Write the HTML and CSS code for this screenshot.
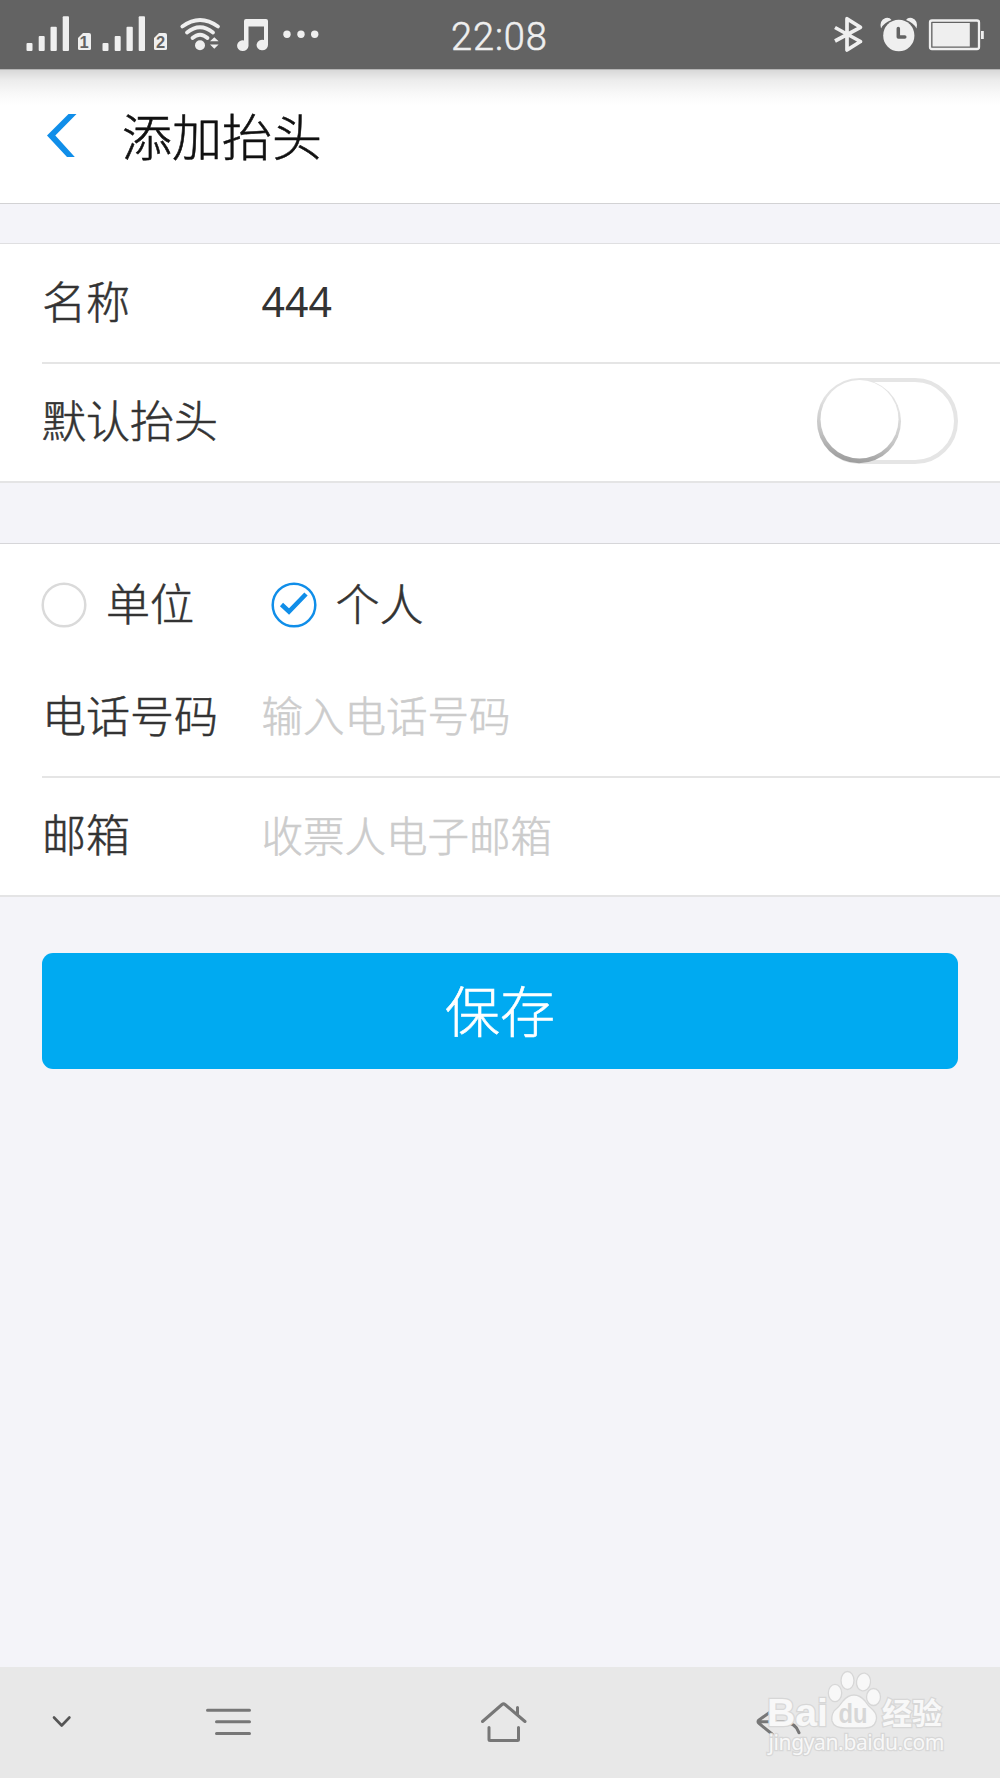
FILE: index.html
```html
<!DOCTYPE html>
<html lang="zh-CN">
<head>
<meta charset="utf-8">
<title>添加抬头</title>
<link rel="stylesheet" href="styles.css">
</head>
<body>
<div class="screen">
  <header class="status">
    <svg class="status-left" width="330" height="69" viewBox="0 0 330 69" fill="#efefef">
      <g id="bars"><rect x="26.500" y="43" width="6" height="8" rx="1"/><rect x="38.700" y="36" width="6" height="15" rx="1"/><rect x="50.500" y="26.700" width="6.300" height="24.300" rx="1"/><rect x="62.700" y="16.300" width="6.300" height="34.700" rx="1"/><path d="M78 38l5-5h6q2 0 2 2v13.500q0 1.500-1.500 1.500h-10q-1.500 0-1.500-1.500z"/></g>
      <use href="#bars" x="76"/>
      <text class="sim" x="84" y="48">1</text>
      <text class="sim" x="160.500" y="48">2</text>
      <g fill="none" stroke="#efefef" stroke-width="3.800" stroke-linecap="round"><path d="M182.300 26.500Q200 13.500 218 26.500"/><path d="M187 32.500Q200 22 213 32.500"/><path d="M192.500 38Q200 31.500 207.500 38"/></g>
      <circle cx="200" cy="45.300" r="5"/><path d="M210 41.300l4.300-4 4.300 4zM210 44.500l4.300 4.300 4.300-4.300z"/>
      <path d="M244 21q0-2 2-2h20q2 0 2 2v24a5.700 5.300 0 1 1-4-5V26.500h-15.500V46a5.700 5.300 0 1 1-4.500-5.500z"/>
      <circle cx="287" cy="34.300" r="3.700"/><circle cx="301" cy="34.300" r="3.700"/><circle cx="314.700" cy="34.300" r="3.700"/>
    </svg>
    <span class="clock">22:08</span>
    <svg class="status-right" width="170" height="69" viewBox="830 0 170 69" fill="#efefef">
      <path d="M835 27.500L860.500 41.500 847 50V18.700L860.500 27.300 835 41" fill="none" stroke="#efefef" stroke-width="3.700" stroke-linejoin="round"/>
      <ellipse cx="898.800" cy="35.500" rx="15.600" ry="15.800"/>
      <path d="M881 28.500q-2-8 4.500-10.500 4-1 6 2Q884 22.500 881 28.500zM916.500 28.500q2-8-4.500-10.500-4-1-6 2 7.500 2.500 10.500 8.500z"/>
      <path d="M898.300 28.500v8.500h6.500" fill="none" stroke="#636363" stroke-width="3.500" stroke-linecap="round" stroke-linejoin="round"/>
      <rect x="930" y="20.500" width="49" height="28.500" rx="2" fill="none" stroke="#efefef" stroke-width="2.300"/>
      <rect x="932.500" y="23" width="37.300" height="23.500"/><rect x="981" y="31" width="2.800" height="8"/>
    </svg>
  </header>

  <div class="title-bar">
    <svg class="back" width="30" height="44" viewBox="0 0 30 44"><path d="M21.500 0H29.500L8.300 21.500 27.800 43H20L0 21.500z" fill="#108ee9"/></svg>
    <h1>添加抬头</h1>
  </div>

  <section class="card card-first">
    <div class="row row-line"><span class="label">名称</span><span class="value">444</span></div>
    <div class="row row-switch">
      <span class="label">默认抬头</span>
      <svg class="switch" width="142" height="88" viewBox="0 0 142 88">
        <defs><linearGradient id="rim" x1=".62" y1="0" x2=".42" y2="1"><stop offset=".3" stop-color="#e3e3e3"/><stop offset=".7" stop-color="#c4c4c4"/><stop offset="1" stop-color="#9b9b9b"/></linearGradient></defs>
        <rect x="2" y="3" width="137" height="82" rx="41" fill="#fff" stroke="#e5e5e5" stroke-width="4"/>
        <ellipse cx="42" cy="44.300" rx="42" ry="42" fill="url(#rim)"/>
        <ellipse cx="42.500" cy="42.300" rx="39" ry="39.300" fill="#fff"/>
      </svg>
    </div>
  </section>

  <section class="card card-second">
    <div class="choices">
      <svg class="radio" width="46" height="46" viewBox="0 0 46 46"><circle cx="23" cy="23" r="21.300" fill="none" stroke="#dadada" stroke-width="2.500"/></svg>
      <span class="choice-one">单位</span>
      <svg class="radio" width="46" height="46" viewBox="0 0 46 46"><circle cx="23" cy="23" r="21.300" fill="none" stroke="#108ee9" stroke-width="2.500"/><path d="M10.500 22.500L18 29.500 35 12" fill="none" stroke="#108ee9" stroke-width="4.600"/></svg>
      <span class="choice-two">个人</span>
    </div>
    <div class="row row-phone"><span class="label">电话号码</span><span class="hint">输入电话号码</span></div>
    <div class="row row-mail"><span class="label">邮箱</span><span class="hint">收票人电子邮箱</span></div>
  </section>

  <div class="save">保存</div>

  <nav class="nav">
    <svg width="1000" height="111" viewBox="0 1667 1000 111" fill="none" stroke="#777" stroke-width="3" stroke-linecap="round" stroke-linejoin="round">
      <path d="M54 1717.500l7.700 8 7.700-8" stroke="#555" stroke-width="2.600"/>
      <path d="M207.500 1710.300h42M216.500 1721.800h33M216.500 1733.500h33"/>
      <path d="M482.500 1721.500L502 1704.500q1.500-1.200 3 0l20 17M517.500 1707.500v7M489 1727.500v12q0 1 1 1h27.500q1 0 1-1v-12"/>
      <path d="M771 1711.500l-12 8.500q-2 1.700 0 3.400l13 10.600M760 1721.700h23q13 1 16 11"/>
    </svg>
    <svg class="watermark" width="190" height="96" viewBox="760 1667 190 96" fill="#f8f8f8" stroke="#d7d7d7" stroke-width="1.300">
      <ellipse cx="835" cy="1693" rx="6.700" ry="8.700"/><ellipse cx="847.500" cy="1680.500" rx="6.500" ry="9"/><ellipse cx="863.500" cy="1682" rx="7" ry="9" transform="rotate(8 863.500 1682)"/><ellipse cx="873.500" cy="1697" rx="7" ry="8.500"/>
      <path d="M834 1711q5-4 9-10 5-6 11-6t11 6q3 5 8 9 5 5 3 11-2 7-11 7h-20q-11 0-13-7-1-5 2-10z"/>
      <text class="bai" x="767" y="1726" textLength="61" lengthAdjust="spacingAndGlyphs">Bai</text>
      <text class="du" x="838.500" y="1723" textLength="29" lengthAdjust="spacingAndGlyphs">du</text>
      <text class="jy" x="882" y="1723.500" textLength="60">经验</text>
      <text class="url" x="768.500" y="1750" textLength="176">jingyan.baidu.com</text>
    </svg>
  </nav>
</div>
</body>
</html>
```

FILE: styles.css
```css
* { box-sizing: border-box; }

body {
  margin: 0;
  background: #f4f4f9;
  color: #333;
  font-family: "Noto Sans CJK SC", sans-serif;
  font-weight: 300;
  -webkit-text-stroke: .55px;
}

.screen {
  display: flex;
  flex-direction: column;
  width: 1000px;
  height: 1778px;
  overflow: hidden;
}

.status {
  display: flex;
  justify-content: space-between;
  height: 69px;
  flex: none;
  background: #636363;
}

.status-left { margin-right: 121px; }
.sim { font: 700 16.5px "Liberation Sans", sans-serif; fill: #636363; text-anchor: middle; }

.clock {
  flex: 1;
  color: #efefef;
  font: 300 38px/74px Roboto, sans-serif;
  letter-spacing: .9px;
}

.title-bar {
  display: flex;
  align-items: center;
  flex: none;
  height: 135px;
  padding-left: 46.5px;
  border-top: 1px solid #b5b5b5;
  border-bottom: 1px solid #d2d2d4;
  background: linear-gradient(#d8d8d8, #ececec 10px, #f8f8f8 23px, #fff 35px);
}

.back { margin: -1px 45.5px 0 0; }
h1 { margin: 0; padding-bottom: 6px; color: #111; font-size: 50px; font-weight: 300; line-height: 60px; }

.card {
  flex: none;
  background: #fff;
  border-top: 1px solid #dfdfe1;
  border-bottom: 2px solid #e4e4e5;
}

.card-first { height: 240px; margin-top: 39px; }
.card-second { height: 354px; margin-top: 60px; border-top-color: #d6d6d9; }

.row {
  display: flex;
  align-items: center;
  height: 120px;
  margin-left: 42px;
  font-size: 44px;
  line-height: 60px;
}

.row-line,
.row-phone { border-bottom: 2px solid #e5e5e5; }
.row-switch { height: 117px; padding-right: 41px; justify-content: space-between; }
.row-mail { height: 117px; }

.switch { margin-bottom: 3px; }
.label { width: 219.5px; padding-bottom: 7px; }
.value { padding-bottom: 5px; font: 400 41px/60px "Noto Sans", sans-serif; -webkit-text-stroke: 0; }
.hint { padding-bottom: 6px; color: #ccc; font-size: 41.5px; }

.choices {
  display: flex;
  align-items: center;
  height: 114px;
  padding: 8px 0 0 41px;
  font-size: 44px;
  line-height: 60px;
}

.choice-one { width: 165px; margin: -7px 0 0 19px; }
.choice-two { margin: -7px 0 0 18.5px; }

.save {
  display: flex;
  align-items: center;
  justify-content: center;
  flex: none;
  height: 116px;
  margin: 56px 42px 0;
  padding-bottom: 6px;
  border-radius: 11px;
  background: #00aaf1;
  color: #fff;
  font-size: 55px;
}

.nav {
  position: relative;
  flex: none;
  height: 111px;
  margin-top: auto;
  background: #e8e8e8;
}

.nav svg { display: block; }
.nav .watermark { position: absolute; left: 760px; top: 0; }
.watermark text { paint-order: stroke; stroke-width: 2.5px; -webkit-text-stroke: 2px #d7d7d7; }
.bai { font: 700 39px "Liberation Sans", sans-serif; }
.jy { font: 700 30px "Noto Sans CJK SC", sans-serif; }
.url { font: 400 21px "Noto Sans", sans-serif; }
.watermark .du { font: 700 27px "Liberation Sans", sans-serif; fill: #d7d7d7; stroke: none; -webkit-text-stroke: 0; }
```
